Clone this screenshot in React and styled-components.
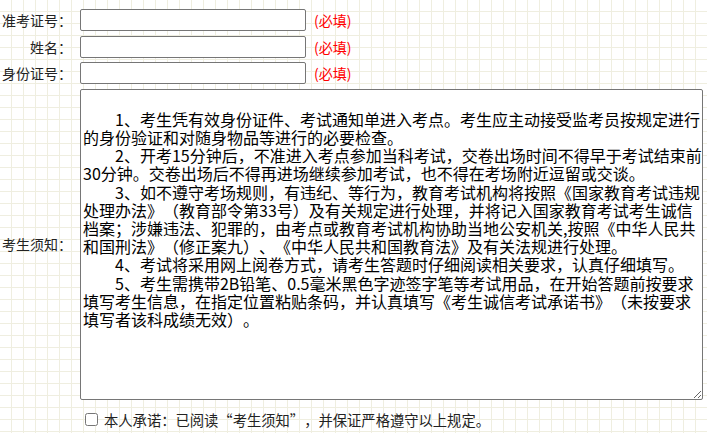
import React from 'react'
import styled, { createGlobalStyle } from 'styled-components'

const GlobalStyle = createGlobalStyle`
  html, body {
    margin: 0;
    padding: 0;
  }
  body {
    min-height: 100vh;
    background-color: #ffffff;
    background-image:
      linear-gradient(to right, #efeee0 1px, transparent 1px),
      linear-gradient(to bottom, #efeee0 1px, transparent 1px);
    background-size: 12px 12px;
    background-position: 11px 11px;
    font-family: 'Noto Sans CJK SC', 'Noto Sans', sans-serif;
    color: #222;
  }
  * {
    text-spacing-trim: space-all;
  }
`

const notice = `
　　1、考生凭有效身份证件、考试通知单进入考点。考生应主动接受监考员按规定进行
的身份验证和对随身物品等进行的必要检查。
　　2、开考15分钟后，不准进入考点参加当科考试，交卷出场时间不得早于考试结束前
30分钟。交卷出场后不得再进场继续参加考试，也不得在考场附近逗留或交谈。
　　3、如不遵守考场规则，有违纪、等行为，教育考试机构将按照《国家教育考试违规
处理办法》（教育部令第33号）及有关规定进行处理，并将记入国家教育考试考生诚信
档案；涉嫌违法、犯罪的，由考点或教育考试机构协助当地公安机关,按照《中华人民共
和国刑法》（修正案九）、《中华人民共和国教育法》及有关法规进行处理。
　　4、考试将采用网上阅卷方式，请考生答题时仔细阅读相关要求，认真仔细填写。
　　5、考生需携带2B铅笔、0.5毫米黑色字迹签字笔等考试用品，在开始答题前按要求
填写考生信息，在指定位置粘贴条码，并认真填写《考生诚信考试承诺书》（未按要求
填写者该科成绩无效）。`

const Form = styled.form`
  display: flex;
  flex-direction: column;
  gap: 4.5px;
  padding-top: 9px;
`

const Row = styled.div`
  display: flex;
  align-items: center;
`

const Label = styled.label`
  width: 72px;
  margin-right: 8px;
  flex-shrink: 0;
  text-align: right;
  font-size: 14px;
  line-height: 20px;
  color: #222;
  white-space: nowrap;
`

const TextInput = styled.input`
  box-sizing: border-box;
  width: 226px;
  height: 22px;
  margin: 0;
  padding: 1px 4px;
  border: 1px solid #767676;
  border-radius: 2px;
  background: #fff;
  font-size: 14px;
  font-family: 'Noto Sans CJK SC', sans-serif;
`

const Required = styled.span`
  margin-left: 8px;
  font-size: 14px;
  color: #ff0000;
`

const Notice = styled.textarea`
  box-sizing: border-box;
  width: 623px;
  height: 311px;
  margin: 0;
  padding: 2px;
  border: 1px solid #767676;
  border-radius: 2px;
  background: #fff;
  color: #000;
  font-family: 'Noto Sans CJK SC', sans-serif;
  font-size: 16px;
  line-height: 18.2px;
  white-space: pre;
  overflow: hidden;
`

const Agree = styled.label`
  display: flex;
  align-items: center;
  padding-left: 85px;
  margin-top: 5px;
  font-size: 14.3px;
  color: #222;
`

const Check = styled.input`
  width: 13px;
  height: 13px;
  margin: 0 6px 0 0;
`

const Field = ({ label, required }) => (
  <Row>
    <Label>{label}</Label>
    <TextInput type="text" />
    {required && <Required>(必填)</Required>}
  </Row>
)

export default function App() {
  return (
    <>
      <GlobalStyle />
      <Form onSubmit={e => e.preventDefault()}>
        <Field label="准考证号：" required />
        <Field label="姓名：" required />
        <Field label="身份证号：" required />
        <Row>
          <Label>考生须知：</Label>
          <Notice wrap="off" defaultValue={notice} />
        </Row>
        <Agree>
          <Check type="checkbox" />
          本人承诺：已阅读“考生须知”，并保证严格遵守以上规定。
        </Agree>
      </Form>
    </>
  )
}
